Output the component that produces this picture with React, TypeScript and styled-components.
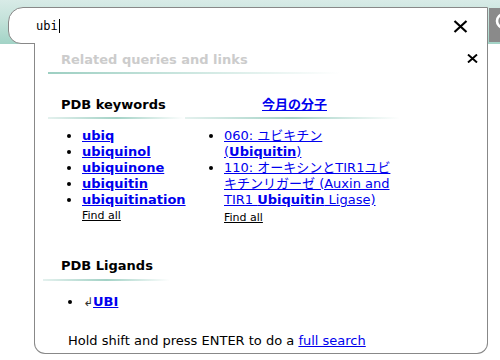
import styled, { createGlobalStyle } from "styled-components"

const GlobalStyle = createGlobalStyle`
  html, body {
    margin: 0;
    padding: 0;
    background: #fff;
  }
  body {
    font-family: "DejaVu Sans", Verdana, "Noto Sans CJK JP", sans-serif;
  }
`;

interface Keyword {
  text: string
}

const keywords: Keyword[] = [
  { text: "ubiq" },
  { text: "ubiquinol" },
  { text: "ubiquinone" },
  { text: "ubiquitin" },
  { text: "ubiquitination" },
]

export default function App() {
  return (
    <Page>
      <GlobalStyle />
      <Header>
        <SearchBox>
          <Query>ubi</Query>
          <Caret />
          <ClearButton aria-label="clear">
            <svg width="15" height="13" viewBox="0 0 15 13">
              <path d="M1.5 1 L13.5 12 M13.5 1 L1.5 12" stroke="#000" strokeWidth="2.2" fill="none" />
            </svg>
          </ClearButton>
        </SearchBox>
        <SearchButton aria-label="search">
          <svg width="36" height="34" viewBox="0 0 36 34">
            <circle cx="15" cy="13" r="7" stroke="#fff" strokeWidth="2.6" fill="none" />
            <path d="M20 18 L27 25" stroke="#fff" strokeWidth="3" />
          </svg>
        </SearchButton>
      </Header>

      <Dropdown>
        <CloseButton aria-label="close">
          <svg width="11" height="9" viewBox="0 0 11 9">
            <path d="M1 0.5 L10 8.5 M10 0.5 L1 8.5" stroke="#000" strokeWidth="1.9" fill="none" />
          </svg>
        </CloseButton>

        <RelatedTitle>Related queries and links</RelatedTitle>

        <Columns>
          <Column>
            <SectionTitle $pad="0 0 6px 13px">PDB keywords</SectionTitle>
            <ColumnBody $indent="34px">
              <List>
                {keywords.map((k) => (
                  <Item key={k.text}>
                    <StrongLink href="#">{k.text}</StrongLink>
                  </Item>
                ))}
              </List>
              <FindAll href="#">Find all</FindAll>
            </ColumnBody>
          </Column>
          <Column>
            <SectionTitle $pad="0 0 6px 4px" $center>
              <HeadLink href="#">今月の分子</HeadLink>
            </SectionTitle>
            <ColumnBody $indent="39px" $top="9px">
              <List $width="172px">
                <Item>
                  <PlainLink href="#">
                    060: ユビキチン (<b>Ubiquitin</b>)
                  </PlainLink>
                </Item>
                <Item>
                  <PlainLink href="#">
                    110: オーキシンとTIR1ユビキチンリガーゼ (Auxin and TIR1 <b>Ubiquitin</b> Ligase)
                  </PlainLink>
                </Item>
              </List>
              <FindAll href="#" $top="2px">Find all</FindAll>
            </ColumnBody>
          </Column>
        </Columns>

        <Ligands>
          <SectionTitle $pad="0 0 7px 18px" $width="127px">PDB Ligands</SectionTitle>
          <ColumnBody $indent="40px" $top="13px">
            <List>
              <Item>
                <Arrow>↲</Arrow>
                <StrongLink href="#">UBI</StrongLink>
              </Item>
            </List>
          </ColumnBody>
        </Ligands>

        <Hint>
          Hold shift and press ENTER to do a <PlainLink href="#">full search</PlainLink>
        </Hint>
      </Dropdown>
    </Page>
  )
}

const Page = styled.div`
  width: 500px;
  height: 360px;
  overflow: hidden;
  background: #fff;
`;

const Header = styled.div`
  display: flex;
  align-items: flex-start;
  gap: 1px;
  height: 44px;
  padding: 7px 0 0 8px;
  box-sizing: border-box;
  background: linear-gradient(to bottom, #d8ebe7 0%, #c4e2da 45%, #a2d3c6 100%);
`;

const SearchBox = styled.div`
  flex: 0 0 480px;
  height: 37px;
  box-sizing: border-box;
  border: 1px solid #888;
  border-radius: 15px 0 0 13px;
  background: #fff;
  display: flex;
  align-items: center;
  padding: 0 0 0 27px;
`;

const Query = styled.span`
  font-family: "DejaVu Sans Mono", "Liberation Mono", monospace;
  font-size: 12px;
  color: #000;
`;

const Caret = styled.span`
  display: inline-block;
  width: 1px;
  height: 14px;
  margin-left: 1px;
  background: #000;
`;

const ClearButton = styled.span`
  display: flex;
  margin-left: auto;
  margin-right: 19px;
  margin-top: 1px;
`;

const SearchButton = styled.div`
  flex: 0 0 36px;
  height: 34px;
  margin-top: 1px;
  background: #8a8a8a;
  display: flex;
`;

const Dropdown = styled.div`
  position: relative;
  width: 454px;
  height: 311px;
  margin: -1px 0 0 34px;
  box-sizing: border-box;
  border: 1px solid #888;
  border-top: none;
  border-radius: 0 0 11px 11px;
  background: #fff;
  padding: 9px 0 0 13px;
`;

const CloseButton = styled.span`
  position: absolute;
  top: 11px;
  right: 9px;
  display: flex;
`;

const RelatedTitle = styled.div`
  width: 292px;
  padding: 0 0 6px 13px;
  box-sizing: border-box;
  font-size: 13px;
  line-height: 16px;
  font-weight: bold;
  color: #cccccc;
  background: linear-gradient(to right, #9dcfc2 0%, #c9e5de 45%, rgba(255, 255, 255, 0) 100%) no-repeat left bottom / 100% 2px;
`;

const Columns = styled.div`
  display: grid;
  grid-template-columns: 137px 215px;
  margin-top: 23px;
`;

const Column = styled.div`
  display: flex;
  flex-direction: column;
`;

const SectionTitle = styled.div<{ $pad: string; $center?: boolean; $width?: string }>`
  width: ${(p) => p.$width || "auto"};
  padding: ${(p) => p.$pad};
  box-sizing: border-box;
  text-align: ${(p) => (p.$center ? "center" : "left")};
  font-size: 13px;
  line-height: 16px;
  font-weight: bold;
  color: #000;
  background: linear-gradient(to right, #e4f1ee 0%, #a3d2c6 50%, rgba(255, 255, 255, 0) 100%) no-repeat left bottom / 100% 2px;
`;

const HeadLink = styled.a`
  color: #0000ee;
  font-weight: bold;
  text-decoration: underline;
`;

const ColumnBody = styled.div<{ $indent: string; $top?: string }>`
  padding-left: ${(p) => p.$indent};
  margin-top: ${(p) => p.$top || "9px"};
`;

const List = styled.ul<{ $width?: string }>`
  margin: 0;
  padding: 0;
  width: ${(p) => p.$width || "auto"};
  list-style: disc outside;
  font-size: 13px;
  line-height: 16px;
`;

const Item = styled.li`
  margin: 0;
`;

const StrongLink = styled.a`
  color: #0000ee;
  font-weight: bold;
  text-decoration: underline;
`;

const PlainLink = styled.a`
  color: #0000ee;
  text-decoration: underline;
`;

const FindAll = styled.a<{ $top?: string }>`
  display: block;
  width: fit-content;
  margin-top: ${(p) => p.$top || "0"};
  font-size: 11px;
  line-height: 16px;
  color: #000;
  text-decoration: underline;
`;

const Ligands = styled.div`
  margin: 32px 0 0 -5px;
`;

const Arrow = styled.span`
  color: #333;
  font-size: 12px;
`;

const Hint = styled.div`
  margin: 23px 0 0 20px;
  font-size: 13px;
  line-height: 16px;
  color: #000;
`;
